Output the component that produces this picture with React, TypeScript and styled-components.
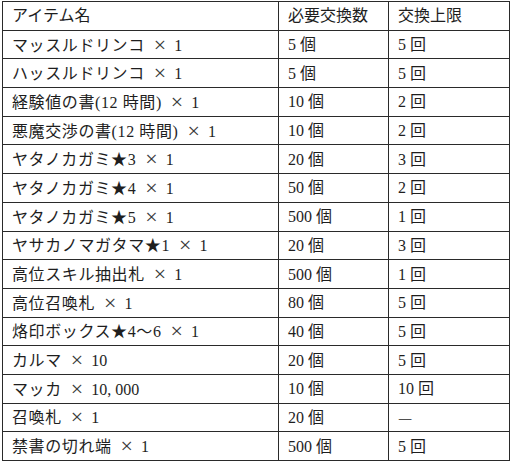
import React from 'react';
import styled, { createGlobalStyle } from 'styled-components';

const GlobalStyle = createGlobalStyle`
  html, body {
    margin: 0;
    padding: 0;
    background: #fff;
  }
  body {
    font-family: "Liberation Serif", "Noto Sans CJK JP", serif;
    color: #1e1e1e;
  }
`;

const Page = styled.div`
  padding: 1px 0 0 2px;
`;

const Table = styled.table`
  border-collapse: collapse;
  width: 507px;
  table-layout: fixed;
  font-size: 16px;
  line-height: 1;
`;

const Col = styled.col<{ w: number }>`
  width: ${(p) => p.w}px;
`;

const Row = styled.tr`
  height: 28.7px;
`;

const Cell = styled.td`
  border: 1px solid #2a2a2a;
  padding: 1px 8px 0 9px;
  white-space: nowrap;
  text-align: left;
  vertical-align: middle;
  font-weight: normal;
`;

const HeadCell = styled(Cell).attrs({ as: 'th' })``;

const Name = styled.span`
  letter-spacing: 0.6px;
`;

const Cross = styled.span`
  display: inline-block;
  margin: 0 8px 0 9px;
  font-size: 22px;
  line-height: 16px;
  vertical-align: -1px;
  color: #3a3a3a;
`;

const Dash = styled.span`
  font-family: "Noto Sans CJK JP", sans-serif;
  font-weight: 300;
`;

const rows = [
  ['マッスルドリンコ', '1', '5 個', '5 回'],
  ['ハッスルドリンコ', '1', '5 個', '5 回'],
  ['経験値の書(12 時間)', '1', '10 個', '2 回'],
  ['悪魔交渉の書(12 時間)', '1', '10 個', '2 回'],
  ['ヤタノカガミ★3', '1', '20 個', '3 回'],
  ['ヤタノカガミ★4', '1', '50 個', '2 回'],
  ['ヤタノカガミ★5', '1', '500 個', '1 回'],
  ['ヤサカノマガタマ★1', '1', '20 個', '3 回'],
  ['高位スキル抽出札', '1', '500 個', '1 回'],
  ['高位召喚札', '1', '80 個', '5 回'],
  ['烙印ボックス★4〜6', '1', '40 個', '5 回'],
  ['カルマ', '10', '20 個', '5 回'],
  ['マッカ', '10, 000', '10 個', '10 回'],
  ['召喚札', '1', '20 個', ''],
  ['禁書の切れ端', '1', '500 個', '5 回'],
];

const App: React.FC = () => {
  return (
    <Page>
      <GlobalStyle />
      <Table>
        <colgroup>
          <Col w={276} />
          <Col w={110} />
          <Col w={121} />
        </colgroup>
        <thead>
          <Row>
            <HeadCell>アイテム名</HeadCell>
            <HeadCell>必要交換数</HeadCell>
            <HeadCell>交換上限</HeadCell>
          </Row>
        </thead>
        <tbody>
          {rows.map((item, index) => (
            <Row key={index.toString()}>
              <Cell>
                <Name>{item[0]}</Name>
                <Cross>×</Cross>
                {item[1]}
              </Cell>
              <Cell>{item[2]}</Cell>
              <Cell>{item[3] ? item[3] : <Dash>—</Dash>}</Cell>
            </Row>
          ))}
        </tbody>
      </Table>
    </Page>
  );
};

export default App;
